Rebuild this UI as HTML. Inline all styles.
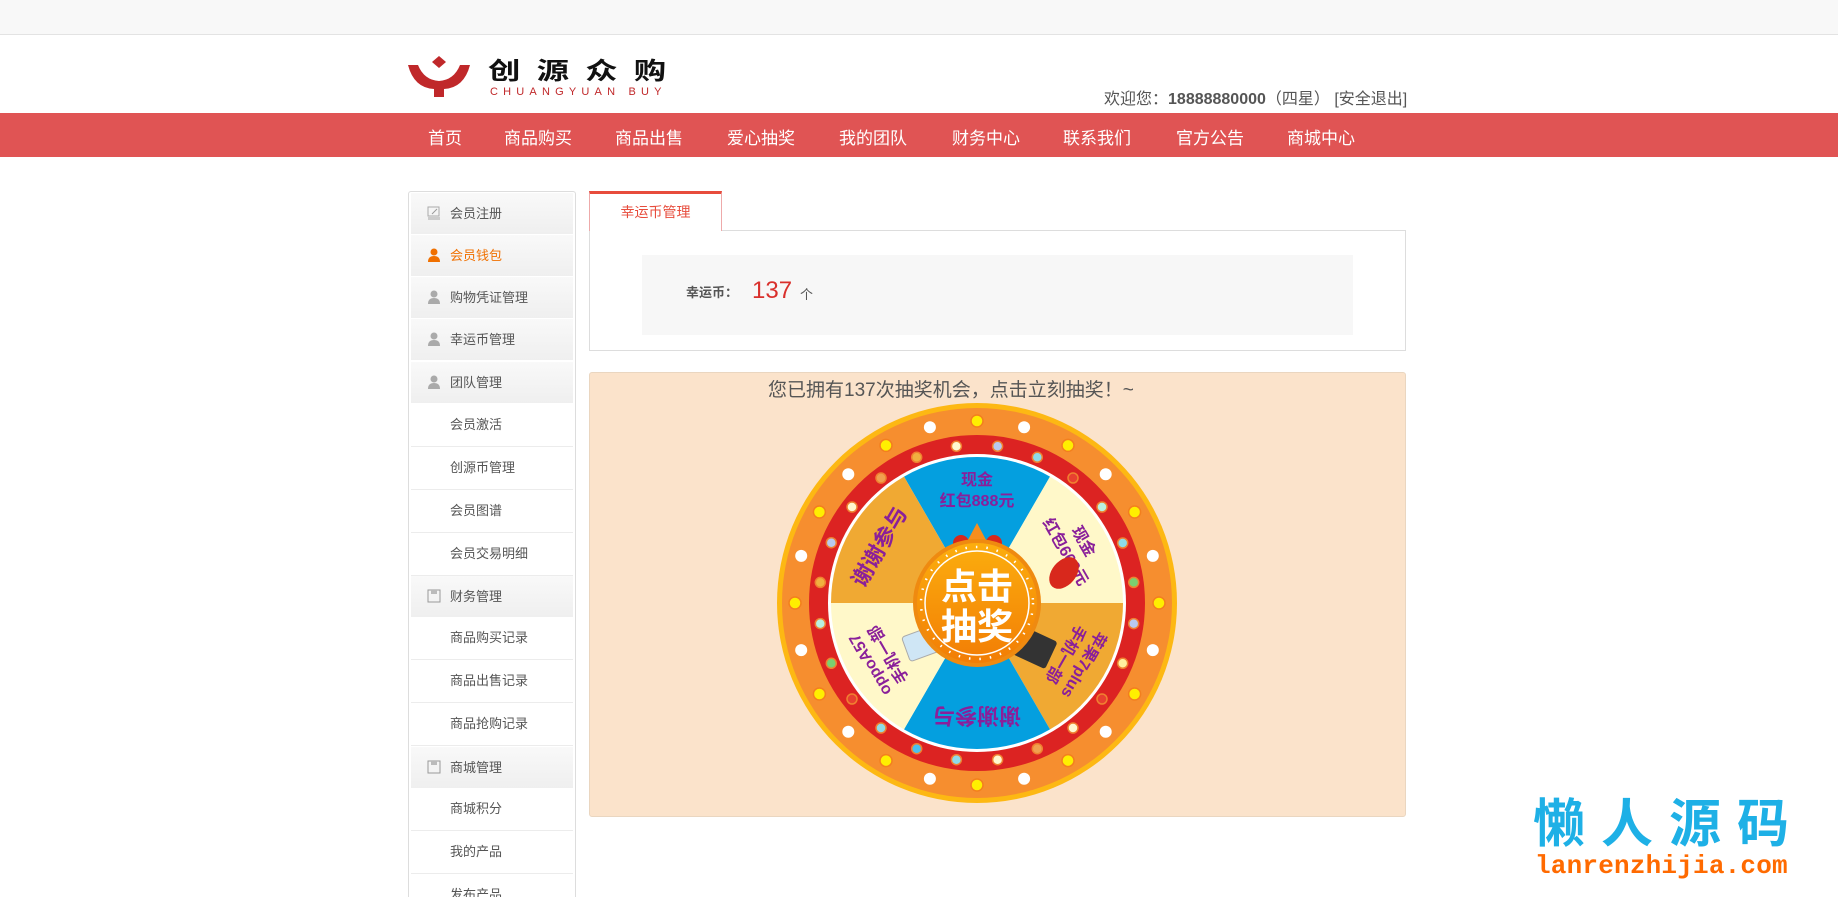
<!DOCTYPE html>
<html><head><meta charset="utf-8">
<style>
*{margin:0;padding:0;box-sizing:border-box}
html,body{width:1838px;height:897px;overflow:hidden}
body{background:#fff;font-family:"Liberation Sans","Noto Sans CJK SC",sans-serif;position:relative;color:#555}
.abs{position:absolute}
.top{left:0;top:0;width:1838px;height:35px;background:#f8f8f8;border-bottom:1px solid #e3e3e3}
.nav{left:0;top:113px;width:1838px;height:44px;background:#e05454}
.nav span{position:absolute;top:11px;color:#fff;font-size:17px;white-space:nowrap}
.side{left:408px;top:191px;width:168px;height:712px;border:1px solid #ddd;border-bottom:none;border-radius:3px 3px 0 0;background:#fff;overflow:hidden}
.it{position:absolute;left:2px;width:162px;height:41px;font-size:13px;line-height:41px;color:#555}
.hd{background:linear-gradient(#f9f9f9,#efefef)}
.hd span{position:absolute;left:39px}
.sub{border-bottom:1px solid #ececec}
.sub span{position:absolute;left:39px}
.ic{position:absolute;left:16px;top:13px}
</style></head><body>
<div class="abs top"></div>
<!-- logo -->
<svg class="abs" style="left:406px;top:55px" width="70" height="45" viewBox="0 0 70 45">
<path d="M33 1 L40 7 L33 13 L26 7Z" fill="#c0282a"/>
<path d="M2 10 L12 10 Q18 25 33 26 Q48 25 54 10 L64 10 Q58 33 38 34 L38 42 L28 42 L28 34 Q8 33 2 10Z" fill="#c0282a"/>
</svg>
<div class="abs" style="left:488px;top:58px;font-size:24px;font-weight:bold;color:#111;letter-spacing:12px;line-height:28px;white-space:nowrap;transform:scaleX(1.35);transform-origin:0 0">创源众购</div>
<div class="abs" style="left:490px;top:87px;font-size:11px;color:#c0282a;letter-spacing:5.2px;line-height:11px;white-space:nowrap">CHUANGYUAN BUY</div>
<div class="abs" style="left:1104px;top:85px;font-size:16px;color:#555;white-space:nowrap">欢迎您：<b>18888880000</b>（四星） [安全退出]</div>
<div class="abs nav">
<span style="left:428px">首页</span><span style="left:504px">商品购买</span><span style="left:615px">商品出售</span><span style="left:727px">爱心抽奖</span><span style="left:839px">我的团队</span><span style="left:952px">财务中心</span><span style="left:1063px">联系我们</span><span style="left:1176px">官方公告</span><span style="left:1287px">商城中心</span>
</div>
<!-- sidebar -->
<div class="abs side">
<div class="it hd" style="top:1px"><svg class="ic" width="14" height="14"><rect x="1" y="1" width="11" height="9" fill="none" stroke="#aaa"/><path d="M5 8 L10 3" stroke="#999"/><rect x="1" y="11" width="12" height="3" fill="#ccc"/></svg><span>会员注册</span></div>
<div class="it hd" style="top:43px;color:#f07000"><svg class="ic" width="14" height="14"><circle cx="7" cy="4" r="3.5" fill="#f07000"/><path d="M1 14 Q1 8 7 8 Q13 8 13 14Z" fill="#f07000"/></svg><span>会员钱包</span></div>
<div class="it hd" style="top:85px"><svg class="ic" width="14" height="14"><circle cx="7" cy="4" r="3.5" fill="#aaa"/><path d="M1 14 Q1 8 7 8 Q13 8 13 14Z" fill="#aaa"/></svg><span>购物凭证管理</span></div>
<div class="it hd" style="top:127px"><svg class="ic" width="14" height="14"><circle cx="7" cy="4" r="3.5" fill="#aaa"/><path d="M1 14 Q1 8 7 8 Q13 8 13 14Z" fill="#aaa"/></svg><span>幸运币管理</span></div>
<div class="it hd" style="top:170px"><svg class="ic" width="14" height="14"><circle cx="7" cy="4" r="3.5" fill="#aaa"/><path d="M1 14 Q1 8 7 8 Q13 8 13 14Z" fill="#aaa"/></svg><span>团队管理</span></div>
<div class="it sub" style="top:212px;height:43px"><span>会员激活</span></div>
<div class="it sub" style="top:255px;height:43px"><span>创源币管理</span></div>
<div class="it sub" style="top:298px;height:43px"><span>会员图谱</span></div>
<div class="it sub" style="top:341px;height:43px"><span>会员交易明细</span></div>
<div class="it hd" style="top:384px"><svg class="ic" width="14" height="14"><rect x="1" y="1" width="12" height="12" fill="none" stroke="#999"/><rect x="4" y="1" width="6" height="4" fill="#bbb"/></svg><span>财务管理</span></div>
<div class="it sub" style="top:425px;height:43px"><span>商品购买记录</span></div>
<div class="it sub" style="top:468px;height:43px"><span>商品出售记录</span></div>
<div class="it sub" style="top:511px;height:43px"><span>商品抢购记录</span></div>
<div class="it hd" style="top:555px"><svg class="ic" width="14" height="14"><rect x="1" y="1" width="12" height="12" fill="none" stroke="#999"/><rect x="4" y="1" width="6" height="4" fill="#bbb"/></svg><span>商城管理</span></div>
<div class="it sub" style="top:596px;height:43px"><span>商城积分</span></div>
<div class="it sub" style="top:639px;height:43px"><span>我的产品</span></div>
<div class="it sub" style="top:682px;height:43px"><span>发布产品</span></div>
</div>
<!-- tab -->
<div class="abs" style="left:589px;top:230px;width:817px;height:121px;border:1px solid #ddd;background:#fff"></div>
<div class="abs" style="left:589px;top:191px;width:133px;height:40px;border:1px solid #eaa;border-top:3px solid #e74c3c;border-bottom:none;background:#fff;color:#e74c3c;font-size:14px;text-align:center;line-height:36px">幸运币管理</div>
<div class="abs" style="left:642px;top:255px;width:711px;height:80px;background:#f7f7f7"></div>
<div class="abs" style="left:686px;top:282px;font-size:13px;font-weight:bold;color:#555">幸运币：</div>
<div class="abs" style="left:752px;top:277px;font-size:24px;color:#d9302c;line-height:28px">137</div>
<div class="abs" style="left:800px;top:284px;font-size:13px;color:#555">个</div>
<!-- wheel panel -->
<div class="abs" style="left:589px;top:372px;width:817px;height:445px;background:#fbe3cb;border:1px solid #ead6c0;border-radius:3px"></div>
<div class="abs" style="left:768px;top:375px;font-size:19px;color:#555;white-space:nowrap">您已拥有137次抽奖机会，点击立刻抽奖！~</div>
<svg class="abs" style="left:777px;top:403px" width="400" height="400" viewBox="0 0 400 400" font-family="Liberation Sans,Noto Sans CJK SC,sans-serif">
<circle cx="200" cy="200" r="200" fill="#fdb813"/>
<circle cx="200" cy="200" r="195" fill="#f68e2f"/>
<circle cx="200" cy="200" r="168" fill="#dc2322"/>
<circle cx="200" cy="200" r="149" fill="#fff"/>
<path d="M200 200 L127 73.6 A146 146 0 0 1 273 73.6Z" fill="#049fdf"/>
<path d="M200 200 L273 73.6 A146 146 0 0 1 346 200Z" fill="#fff8c9"/>
<path d="M200 200 L346 200 A146 146 0 0 1 273 326.4Z" fill="#f0a933"/>
<path d="M200 200 L273 326.4 A146 146 0 0 1 127 326.4Z" fill="#049fdf"/>
<path d="M200 200 L127 326.4 A146 146 0 0 1 54 200Z" fill="#fff8c9"/>
<path d="M200 200 L54 200 A146 146 0 0 1 127 73.6Z" fill="#f0a933"/>
<g fill="#8a1f9a" font-weight="bold" text-anchor="middle">
<g><text x="200" y="82" font-size="16">现金</text><text x="200" y="103" font-size="16">红包888元</text></g>
<g transform="rotate(60 200 200)"><text x="200" y="82" font-size="16">现金</text><text x="200" y="103" font-size="16">红包666元</text></g>
<g transform="rotate(120 200 200)"><text x="200" y="82" font-size="16">苹果7plus</text><text x="200" y="103" font-size="16">手机一部</text></g>
<g transform="rotate(180 200 200)"><text x="200" y="95" font-size="22">谢谢参与</text></g>
<g transform="rotate(240 200 200)"><text x="200" y="82" font-size="16">oppoA57</text><text x="200" y="103" font-size="16">手机一部</text></g>
<g transform="rotate(300 200 200)"><text x="200" y="95" font-size="22">谢谢参与</text></g>
</g>
<g fill="#ffef00" stroke="#f37f1e" stroke-width="1.5">
<circle cx="200" cy="18" r="6"/><circle cx="291" cy="42.4" r="6"/><circle cx="357.6" cy="109" r="6"/><circle cx="382" cy="200" r="6"/><circle cx="357.6" cy="291" r="6"/><circle cx="291" cy="357.6" r="6"/><circle cx="200" cy="382" r="6"/><circle cx="109" cy="357.6" r="6"/><circle cx="42.4" cy="291" r="6"/><circle cx="18" cy="200" r="6"/><circle cx="42.4" cy="109" r="6"/><circle cx="109" cy="42.4" r="6"/>
</g>
<g fill="#fff">
<circle cx="247.1" cy="24.2" r="6"/><circle cx="328.7" cy="71.3" r="6"/><circle cx="375.8" cy="152.9" r="6"/><circle cx="375.8" cy="247.1" r="6"/><circle cx="328.7" cy="328.7" r="6"/><circle cx="247.1" cy="375.8" r="6"/><circle cx="152.9" cy="375.8" r="6"/><circle cx="71.3" cy="328.7" r="6"/><circle cx="24.2" cy="247.1" r="6"/><circle cx="24.2" cy="152.9" r="6"/><circle cx="71.3" cy="71.3" r="6"/><circle cx="152.9" cy="24.2" r="6"/>
</g>
<g stroke="#f08030" stroke-width="1.5">
<circle cx="220.6" cy="43.3" r="5" fill="#b9c9ef"/><circle cx="260.3" cy="54.3" r="5" fill="#8edbe8"/><circle cx="296" cy="75" r="5" fill="#e84030"/><circle cx="325" cy="104" r="5" fill="#b9f0e0"/><circle cx="345.7" cy="140" r="5" fill="#8edbe8"/><circle cx="356.7" cy="179.4" r="5" fill="#7ad070"/><circle cx="356.7" cy="220.6" r="5" fill="#b9c9ef"/><circle cx="345.7" cy="260.3" r="5" fill="#fff0a0"/><circle cx="325" cy="296" r="5" fill="#e84030"/><circle cx="296" cy="325" r="5" fill="#fff8d0"/><circle cx="260.3" cy="345.7" r="5" fill="#f0a050"/><circle cx="220.6" cy="356.7" r="5" fill="#fff8d0"/><circle cx="179.4" cy="356.7" r="5" fill="#8edbe8"/><circle cx="139.7" cy="345.7" r="5" fill="#4cc0ee"/><circle cx="104" cy="325" r="5" fill="#8edbe8"/><circle cx="75" cy="296" r="5" fill="#e84030"/><circle cx="54.3" cy="260.3" r="5" fill="#7ad070"/><circle cx="43.3" cy="220.6" r="5" fill="#b9f0e0"/><circle cx="43.3" cy="179.4" r="5" fill="#f0b040"/><circle cx="54.3" cy="139.7" r="5" fill="#b9c9ef"/><circle cx="75" cy="104" r="5" fill="#fff8d0"/><circle cx="104" cy="75" r="5" fill="#f0a050"/><circle cx="139.7" cy="54.3" r="5" fill="#f0b040"/><circle cx="179.4" cy="43.3" r="5" fill="#fff8d0"/>
</g>
<path d="M200 120 L184 150 L216 150Z" fill="#f68e1e"/>
<circle cx="184" cy="140" r="8" fill="#d8281c"/><circle cx="217" cy="140" r="8" fill="#d8281c"/>
<ellipse cx="287" cy="170" rx="12" ry="18" transform="rotate(40 287 170)" fill="#d8281c"/>
<rect x="240" y="230" width="36" height="30" rx="3" fill="#333" transform="rotate(25 258 245)"/>
<rect x="128" y="228" width="32" height="26" rx="3" fill="#cfe6f5" stroke="#aaa" transform="rotate(-20 144 241)"/>
<defs><linearGradient id="g" x1="0" y1="0" x2="0" y2="1"><stop offset="0" stop-color="#fcae0e"/><stop offset="1" stop-color="#f27d05"/></linearGradient></defs>
<circle cx="200" cy="200" r="64" fill="#ef8a10"/>
<circle cx="200" cy="200" r="60" fill="url(#g)"/>
<circle cx="200" cy="200" r="52" fill="none" stroke="#fff" stroke-width="1.5"/>
<circle cx="200" cy="200" r="56" fill="none" stroke="#fff" stroke-width="2.5" stroke-dasharray="1.5 9"/>
<text x="200" y="196" font-size="36" font-weight="bold" fill="#fff" text-anchor="middle">点击</text>
<text x="200" y="236" font-size="36" font-weight="bold" fill="#fff" text-anchor="middle">抽奖</text>
</svg>
<!-- watermark -->
<div class="abs" style="left:1533px;top:790px;font-size:52px;font-weight:bold;color:#1eb0e6;letter-spacing:16px;white-space:nowrap;line-height:60px;font-family:'Noto Sans CJK SC',sans-serif">懒人源码</div>
<div class="abs" style="left:1535px;top:852px;font-size:26px;font-weight:bold;color:#ff6a00;font-family:'Liberation Mono',monospace;white-space:nowrap;line-height:28px;letter-spacing:0.2px">lanrenzhijia.com</div>
</body></html>
